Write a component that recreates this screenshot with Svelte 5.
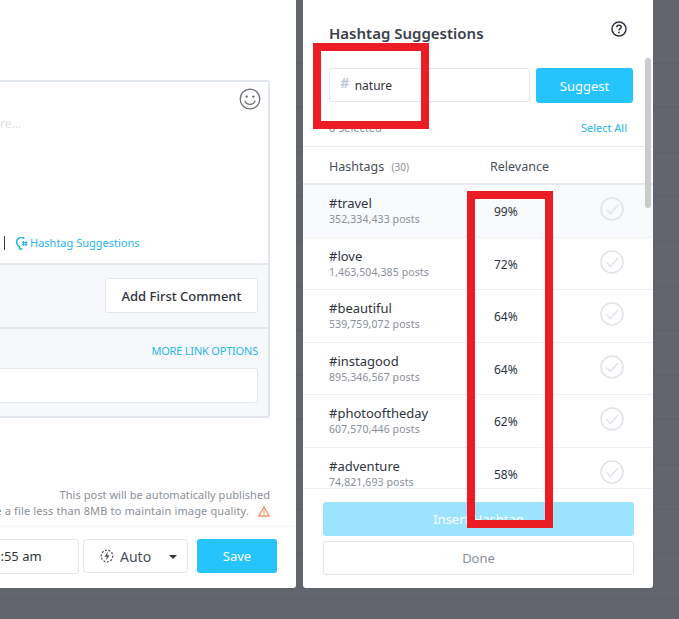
<script>
  const hashtags = [
    { tag: "#travel", posts: "352,334,433", score: "99%" },
    { tag: "#love", posts: "1,463,504,385", score: "72%" },
    { tag: "#beautiful", posts: "539,759,072", score: "64%" },
    { tag: "#instagood", posts: "895,346,567", score: "64%" },
    { tag: "#photooftheday", posts: "607,570,446", score: "62%" },
    { tag: "#adventure", posts: "74,821,693", score: "58%" }
  ];
</script>

<div class="page">
  <section class="composer">
    <div class="editor">
      <div class="caption">
        <svg class="smiley" viewBox="0 0 22 22" width="22" height="22">
          <circle cx="11" cy="11" r="9.8" fill="none" stroke="#6b7079" stroke-width="1.3"/>
          <circle cx="7.6" cy="8.6" r="1.2" fill="#6b7079"/>
          <circle cx="14.4" cy="8.6" r="1.2" fill="#6b7079"/>
          <path d="M5.8 12.8c1 2.4 3 3.6 5.2 3.6s4.2-1.2 5.2-3.6" fill="none" stroke="#6b7079" stroke-width="1.3"/>
        </svg>
        <div class="placeholder">re...</div>
        <div class="tools">
          <span class="divider"></span>
          <svg viewBox="0 0 12 13" width="12" height="13">
            <path d="M8.5 1.7A4.7 4.7 0 1 0 3.5 9.5V12h3" fill="none" stroke="#27b5e8" stroke-width="1.6"/>
            <path d="M7.5 4v5M10 4v5M6 5.5h5.5M6 7.5h5.5" fill="none" stroke="#27b5e8" stroke-width="1.1"/>
          </svg>
          <a href="#hashtags">Hashtag Suggestions</a>
        </div>
      </div>
      <div class="comment-row">
        <button class="plain-btn">Add First Comment</button>
      </div>
      <div class="link-row">
        <span class="link-options">MORE LINK OPTIONS</span>
        <div class="link-input"></div>
      </div>
    </div>

    <div class="notes">
      <p>This post will be automatically published</p>
      <p class="warn-line">
        <span>se a file less than 8MB to maintain image quality.</span>
        <svg viewBox="0 0 12 11" width="12" height="11">
          <path d="M6 1 11.2 10H.8Z" fill="none" stroke="#ef9a6a" stroke-width="1.3"/>
          <path d="M6 4v3.4M6 8.1v1" stroke="#ef9a6a" stroke-width="1.1"/>
        </svg>
      </p>
    </div>

    <footer class="actions">
      <div class="time">8:55 am</div>
      <div class="auto">
        <svg viewBox="0 0 14 14" width="14" height="14">
          <circle cx="7" cy="7" r="5.8" fill="none" stroke="#4b4f57" stroke-width="1.2" stroke-dasharray="2 1.5"/>
          <path d="M8 2.5 4.5 7.8h2.3L6 11.5l3.5-5.3H7.2Z" fill="#4b4f57"/>
        </svg>
        <span>Auto</span>
        <i class="caret"></i>
      </div>
      <button class="save">Save</button>
    </footer>
  </section>

  <section class="suggestions">
    <header class="head">
      <h2>Hashtag Suggestions</h2>
      <svg viewBox="0 0 16 16" width="16" height="16">
        <circle cx="8" cy="8" r="7" fill="none" stroke="#2f3440" stroke-width="1.5"/>
        <path d="M5.8 6.3c0-1.4 1-2.1 2.2-2.1s2.2.7 2.2 1.900c0 1.600-2.200 1.600-2.200 3.300" fill="none" stroke="#2f3440" stroke-width="1.5"/>
        <circle cx="8" cy="11.5" r=".9" fill="#2f3440"/>
      </svg>
    </header>

    <div class="search">
      <div class="search-input"><b>#</b><span>nature</span></div>
      <button class="suggest">Suggest</button>
    </div>

    <div class="selection">
      <span>0 Selected</span>
      <a href="#all">Select All</a>
    </div>

    <div class="columns">
      <span class="col-tag">Hashtags <small>(30)</small></span>
      <span class="col-score">Relevance</span>
    </div>

    <div class="list">
      {#each hashtags as item, i}
        <div class="row" class:first={i === 0}>
          <div class="tag">
            <div class="name">{item.tag}</div>
            <div class="posts">{item.posts} posts</div>
          </div>
          <div class="score">{item.score}</div>
          <svg class="check" viewBox="0 0 24 24" width="24" height="24">
            <circle cx="12" cy="12" r="11" fill="none" stroke="#e0e4ea" stroke-width="1.6"/>
            <path d="M6.5 12.5l4 4 7.5-8.500" fill="none" stroke="#e0e4ea" stroke-width="1.6"/>
          </svg>
        </div>
      {/each}
    </div>

    <div class="bottom">
      <button class="insert">Insert Hashtag</button>
      <button class="done">Done</button>
    </div>

    <div class="scrollbar"></div>
  </section>

  <div class="mark mark-search"></div>
  <div class="mark mark-score"></div>
</div>

<style>
  :global(body) {
    margin: 0;
    background: #62656e;
  }

  .page {
    position: relative;
    display: flex;
    gap: 7px;
    width: 679px;
    height: 619px;
    overflow: hidden;
    font-family: "Noto Sans", sans-serif;
    color: #2f3440;
    background: repeating-linear-gradient(#62656e 0 43.6px, #5c5f68 43.6px 44.6px) 0 18.6px;
  }

  button {
    font-family: inherit;
    cursor: pointer;
  }

  .composer {
    display: flex;
    flex-direction: column;
    box-sizing: border-box;
    width: 296px;
    height: 588px;
    padding-top: 80px;
    background: #fff;
    border-bottom-right-radius: 3px;
  }

  .editor {
    box-sizing: border-box;
    width: 270px;
    height: 338px;
    border: 2px solid #e2e7ed;
    border-left: none;
    border-radius: 0 3px 3px 0;
    background: #f6f8fb;
  }

  .caption {
    position: relative;
    box-sizing: border-box;
    height: 183px;
    padding-top: 32px;
    background: #fff;
    border-bottom: 2px solid #e2e7ed;
  }

  .smiley {
    position: absolute;
    top: 6px;
    right: 7px;
  }

  .placeholder {
    font-size: 12px;
    line-height: 20px;
    color: #dfe2e6;
  }

  .tools {
    display: flex;
    align-items: center;
    gap: 2px;
    margin-top: 101px;
    padding-left: 4px;
    font-size: 11px;
    line-height: 16px;
  }

  .tools a {
    color: #27b5e8;
    text-decoration: none;
  }

  .divider {
    width: 1px;
    height: 14px;
    margin-right: 9px;
    background: #333a4d;
  }

  .comment-row {
    display: flex;
    justify-content: flex-end;
    box-sizing: border-box;
    height: 64px;
    padding: 13px 10px 0 0;
    border-bottom: 2px solid #e2e7ed;
  }

  .plain-btn {
    width: 153px;
    height: 35px;
    padding: 0;
    font-size: 13px;
    font-weight: 500;
    color: #2f3440;
    background: #fff;
    border: 1px solid #e2e7ed;
    border-radius: 3px;
  }

  .link-row {
    display: flex;
    flex-direction: column;
    align-items: flex-end;
    padding: 14px 10px 0 0;
  }

  .link-options {
    font-size: 11px;
    line-height: 16px;
    color: #27b5e8;
    letter-spacing: -0.2px;
  }

  .link-input {
    width: 100%;
    height: 35px;
    margin-top: 9px;
    box-sizing: border-box;
    background: #fff;
    border: 1px solid #e2e7ed;
    border-left: none;
    border-radius: 0 3px 3px 0;
  }

  .notes {
    width: 270px;
    margin-top: 69px;
    font-size: 11px;
    line-height: 16px;
    color: #8a8f98;
    text-align: right;
    letter-spacing: 0.04px;
    white-space: nowrap;
  }

  .notes p {
    margin: 0;
  }

  .warn-line {
    display: flex;
    justify-content: flex-end;
    align-items: center;
    gap: 9px;
  }

  .warn-line span {
    flex: none;
    letter-spacing: 0.14px;
  }

  .warn-line svg {
    flex: none;
  }

  .actions {
    display: flex;
    align-items: flex-start;
    box-sizing: border-box;
    height: 62px;
    margin-top: 7px;
    padding-top: 12px;
    border-top: 1px solid #f0f2f5;
  }

  .time {
    box-sizing: border-box;
    width: 79px;
    height: 35px;
    font-size: 13px;
    line-height: 33px;
    border: 1px solid #e2e7ed;
    border-left: none;
    border-radius: 0 3px 3px 0;
    text-indent: -7px;
    overflow: hidden;
  }

  .auto {
    display: flex;
    align-items: center;
    box-sizing: border-box;
    width: 105px;
    height: 34px;
    margin-left: 4px;
    padding-left: 16px;
    font-size: 14px;
    color: #4b4f57;
    background: #fff;
    border: 1px solid #e2e7ed;
    border-radius: 3px;
  }

  .auto span {
    margin-left: 6px;
  }

  .caret {
    margin-left: 18px;
    margin-top: 2px;
    border-top: 4px solid #2f3440;
    border-left: 4px solid transparent;
    border-right: 4px solid transparent;
  }

  .save {
    width: 80px;
    height: 34px;
    margin-left: 9px;
    font-size: 13px;
    color: #fff;
    background: #26c4ff;
    border: none;
    border-radius: 3px;
  }

  .suggestions {
    position: relative;
    display: flex;
    flex-direction: column;
    box-sizing: border-box;
    width: 350px;
    height: 588px;
    background: #fff;
    border-bottom-left-radius: 3px;
    border-bottom-right-radius: 3px;
  }

  .head {
    display: flex;
    justify-content: space-between;
    padding: 21px 26px 0 26px;
    height: 47px;
    box-sizing: border-box;
  }

  .head h2 {
    margin: 2px 0 0;
    font-size: 15px;
    line-height: 20px;
    font-weight: 600;
    color: #3a3f4b;
  }

  .search {
    display: flex;
    gap: 6px;
    padding: 21px 20px 0 26px;
  }

  .search-input {
    display: flex;
    align-items: center;
    box-sizing: border-box;
    width: 201px;
    height: 34px;
    padding: 1px 0 0 10px;
    font-size: 12px;
    border: 1px solid #e2e7ed;
    border-radius: 3px;
  }

  .search-input b {
    margin: -7px 5px 0 0;
    font-size: 15px;
    color: #c3ccd8;
  }

  .suggest {
    width: 97px;
    height: 35px;
    font-size: 13px;
    color: #fff;
    background: #26c4ff;
    border: none;
    border-radius: 3px;
  }

  .selection {
    display: flex;
    justify-content: space-between;
    box-sizing: border-box;
    height: 44px;
    padding: 18px 26px 0;
    font-size: 11px;
    line-height: 14px;
    color: #8a8f98;
    border-bottom: 1px solid #e6e9ee;
  }

  .selection a {
    color: #27b5e8;
    text-decoration: none;
  }

  .columns {
    display: flex;
    box-sizing: border-box;
    height: 38px;
    padding: 10px 0 0 26px;
    font-size: 12.5px;
    line-height: 20px;
    color: #4b4f57;
    border-bottom: 2px solid #e6e9ee;
  }

  .col-tag {
    width: 161px;
  }

  .col-tag small {
    margin-left: 4px;
    font-size: 10px;
    color: #8a8f98;
  }

  .list {
    flex: none;
    height: 303px;
    overflow: hidden;
    border-bottom: 1px solid #eef0f4;
  }

  .row {
    display: flex;
    box-sizing: border-box;
    height: 52.5px;
    padding: 10px 0 0 26px;
    border-bottom: 1px solid #eef0f4;
  }

  .row.first {
    background: #f9fafc;
  }

  .tag {
    width: 165px;
  }

  .name {
    font-size: 13px;
    line-height: 17px;
    color: #2f3440;
  }

  .posts {
    font-size: 10.5px;
    line-height: 15px;
    color: #8a8f98;
    letter-spacing: 0.1px;
  }

  .score {
    width: 106px;
    margin-top: 9px;
    font-size: 12px;
    line-height: 16px;
  }

  .check {
    margin-top: 2px;
  }

  .bottom {
    display: flex;
    flex-direction: column;
    gap: 5px;
    padding: 13px 19px 0 20px;
  }

  .insert,
  .done {
    height: 34px;
    padding: 0;
    font-size: 13px;
    border-radius: 3px;
  }

  .insert {
    color: #fff;
    background: #9ce3ff;
    border: none;
  }

  .done {
    color: #8a8f98;
    background: #fff;
    border: 1px solid #e2e7ed;
  }

  .scrollbar {
    position: absolute;
    top: 58px;
    right: 2px;
    width: 6px;
    height: 150px;
    border-radius: 3px;
    background: #cbcbcb;
  }

  .mark {
    position: absolute;
    box-sizing: border-box;
    border: 8px solid #ec1c24;
  }

  .mark-search {
    left: 313px;
    top: 43px;
    width: 116px;
    height: 86px;
  }

  .mark-score {
    left: 467px;
    top: 191px;
    width: 86px;
    height: 337px;
  }
</style>
